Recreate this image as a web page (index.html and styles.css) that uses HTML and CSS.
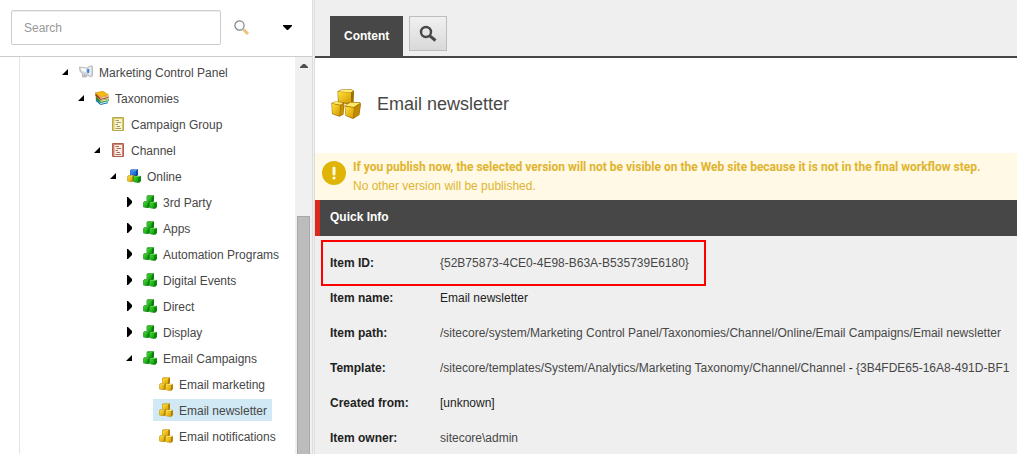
FILE: index.html
```
<!DOCTYPE html>
<html lang="en">
<head>
<meta charset="utf-8">
<title>Content Editor</title>
<link rel="stylesheet" href="styles.css">
</head>
<body>
<svg class="defs" aria-hidden="true">
  <defs>
    <linearGradient id="gold" x1="0" y1="0" x2="1" y2="1"><stop offset="0" stop-color="#ffe23a"/><stop offset="1" stop-color="#d39a00"/></linearGradient>
    <linearGradient id="green" x1="0" y1="0" x2="1" y2="1"><stop offset="0" stop-color="#3fe02e"/><stop offset="1" stop-color="#0c8d10"/></linearGradient>
    <linearGradient id="blue" x1="0" y1="0" x2="1" y2="1"><stop offset="0" stop-color="#4a9cf5"/><stop offset="1" stop-color="#0d50bd"/></linearGradient>
    <symbol id="cube-gold" viewBox="0 0 16 16" preserveAspectRatio="none">
      <path d="M0.4 3 3 0.4 15.4 0.6 15.8 11.5 12.5 15.6 0.8 14Z" fill="#a87300"/>
      <path d="M1 3.3 12 4 12 15 1.2 13.6Z" fill="url(#gold)"/>
      <path d="M1 3 3.2 0.8 15 1 12 3.6Z" fill="#ffe765"/>
      <path d="M12.6 4 15.2 1.6 15.4 11.4 12.6 14.8Z" fill="#b98100"/>
    </symbol>
    <symbol id="cube-green" viewBox="0 0 16 16" preserveAspectRatio="none">
      <path d="M0.4 3 3 0.4 15.4 0.6 15.8 11.5 12.5 15.6 0.8 14Z" fill="#087008"/>
      <path d="M1 3.3 11 4 11 15 1.2 13.6Z" fill="url(#green)"/>
      <path d="M1 3 3.2 0.8 15 1 12 3.6Z" fill="#5cd848"/>
      <path d="M12 4 15.2 1.6 15.4 11.4 12 14.8Z" fill="#078609"/>
    </symbol>
    <symbol id="cube-blue" viewBox="0 0 16 16" preserveAspectRatio="none">
      <path d="M0.4 3 3 0.4 15.4 0.6 15.8 11.5 12.5 15.6 0.8 14Z" fill="#0b3f9b"/>
      <path d="M1 3.3 12 4 12 15 1.2 13.6Z" fill="url(#blue)"/>
      <path d="M1 3 3.2 0.8 15 1 12 3.6Z" fill="#83bdfa"/>
      <path d="M12.6 4 15.2 1.6 15.4 11.4 12.6 14.8Z" fill="#0c49ac"/>
    </symbol>
    <symbol id="cubes-gold" viewBox="0 0 30 30">
      <use href="#cube-gold" x="6" y="0" width="18" height="17"/>
      <use href="#cube-gold" x="0" y="13" width="15" height="15"/>
      <use href="#cube-gold" x="13" y="14" width="17" height="16"/>
    </symbol>
    <symbol id="cubes-large" viewBox="0 0 30 30">
      <path d="M6.5 2.2 10 0.5 20 0.2 23 1.8 22.6 13.5 16.5 15 7 13.8Z" fill="#a17000"/>
      <path d="M7 3 20 3.5 20 14 7.6 13.2Z" fill="url(#gold)"/>
      <path d="M7 2.5 10 1 20 0.8 22.3 2 20 3.2Z" fill="#ffed78"/>
      <path d="M20.5 3.5 22.4 2.5 22 12.8 20.5 13.8Z" fill="#9b6d00"/>
      <path d="M0.4 14 4 12.4 12.8 13 13.4 15 12.5 25.5 8.5 27.7 1 25Z" fill="#a17000"/>
      <path d="M1 14.8 9 16.4 8.6 27 1.5 24.5Z" fill="url(#gold)"/>
      <path d="M1 14.2 4.2 12.8 12.6 13.7 9.4 15.8Z" fill="#ffe765"/>
      <path d="M9.6 16.4 12.8 14.4 12 25.1 9.2 26.9Z" fill="#c89200"/>
      <path d="M13.6 16.8 19 13 29 13.2 30 15 28.4 26 22 30 14.5 26.8Z" fill="#a17000"/>
      <path d="M14 17.4 23 18.7 22 29.2 15 26.2Z" fill="url(#gold)"/>
      <path d="M14.4 16.8 19.3 13.5 29 13.9 23 18Z" fill="#ffe765"/>
      <path d="M23.6 18.7 29.4 14.8 27.9 25.7 22.7 29Z" fill="#c18a00"/>
    </symbol>
    <symbol id="cubes-green" viewBox="0 0 30 30">
      <use href="#cube-green" x="7" y="0" width="17" height="17"/>
      <use href="#cube-green" x="0" y="13" width="15" height="15"/>
      <use href="#cube-green" x="13" y="14" width="17" height="16"/>
    </symbol>
    <symbol id="cubes-mixed" viewBox="0 0 30 30">
      <use href="#cube-blue" x="6" y="0" width="18" height="17"/>
      <use href="#cube-gold" x="0" y="13" width="15" height="15"/>
      <use href="#cube-green" x="13" y="14" width="17" height="16"/>
    </symbol>
    <symbol id="horn" viewBox="0 0 14 14">
      <path d="M0.5 2 8 3 12 0.5 13.5 1.5 13.5 11 12 12 8 9.8 7.5 12 3.5 12 3.5 8.5 1 6.5Z" fill="#d6d9dc" stroke="#a2a5a9" stroke-width=".7"/>
      <path d="M2 2.8 7 3.8 7 7 3 6Z" fill="#fff"/>
      <path d="M9 3.2 12 1.4 12 10.5 9 9Z" fill="#e9edf0"/>
      <ellipse cx="9.2" cy="6" rx="1.2" ry="2.2" fill="#2d83d8"/>
      <path d="M4.5 9 7 9.5 6.5 11.5 4.8 11.5Z" fill="#b4b7bb"/>
    </symbol>
    <symbol id="books" viewBox="0 0 14 14">
      <path d="M1 7 5.5 12.4 13 10.5 13 12.3 5.5 14 0.8 10Z" fill="#1479c4"/>
      <path d="M5.5 12 13 10.2 13 11.2 5.5 13Z" fill="#d6ecf7"/>
      <path d="M0.8 4.8 5.2 9.5 13.8 7.5 13.8 10 5.5 12 0.8 8Z" fill="#2f8c25"/>
      <path d="M5.5 9.8 13.4 8 13.4 9.2 5.5 11Z" fill="#d3edb9"/>
      <path d="M0.3 2 5 6.5 13.5 4.7 13.5 7 5.2 9 0.3 4.7Z" fill="#a73a08"/>
      <path d="M5.3 6.6 13.2 5 13.2 6.1 5.3 7.9Z" fill="#f4d5a3"/>
      <path d="M0.3 1.7 8 0.3 13.6 4 5.4 6Z" fill="#f4bd12" stroke="#be7d00" stroke-width=".5"/>
    </symbol>
    <symbol id="sheet-gold" viewBox="0 0 12 14" preserveAspectRatio="none">
      <path d="M0.5 0.5H11.5V13.5H0.5Z" fill="#fbf5d6" stroke="#b8a94c"/>
      <path d="M1 1H2.5V13H1ZM10 1H11V13H10ZM1 1H11V2H1Z" fill="#d9c763"/>
      <path d="M3.5 3.5H7M4.5 5.5H9M3.5 7.5H6M4.5 9.5H8M3.5 11.5H9" stroke="#8c8546" stroke-width=".8"/>
    </symbol>
    <symbol id="sheet-red" viewBox="0 0 12 14" preserveAspectRatio="none">
      <path d="M0.5 0.5H11.5V13.5H0.5Z" fill="#fcefe6" stroke="#ae5e50"/>
      <path d="M1 1H2.5V13H1ZM10 1H11V13H10ZM1 1H11V2H1Z" fill="#d28371"/>
      <path d="M3.5 3.5H7M4.5 5.5H9M3.5 7.5H6M4.5 9.5H8M3.5 11.5H9" stroke="#96493d" stroke-width=".8"/>
    </symbol>
    <symbol id="open" viewBox="0 0 6 6"><path d="M6 0V6H0Z"/></symbol>
    <symbol id="closed" viewBox="0 0 5 10"><path d="M0 0H1L5 4V6L1 10H0Z"/></symbol>
  </defs>
</svg>
<div class="app">
  <aside class="sidebar">
    <form class="search">
      <input class="search-box" type="text" placeholder="Search" aria-label="Search">
      <button class="plain search-go" type="button" aria-label="Run search">
        <svg width="16" height="16" viewBox="0 0 16 16"><path d="M9.5 9.5 14 14" stroke="#edc178" stroke-width="3"/><circle cx="5.5" cy="5.5" r="4.6" fill="#fafcfd" stroke="#7d8489" stroke-width="1.2"/></svg>
      </button>
      <button class="plain search-menu" type="button" aria-label="Search options">
        <svg width="9" height="5" viewBox="0 0 9 5"><path d="M0 0H9V1L5 5H4L0 1Z"/></svg>
      </button>
    </form>
    <div class="tree-pane">
      <nav class="tree">
        <ul>
          <li><div class="row"><button class="plain toggle" aria-label="Collapse"><svg class="open"><use href="#open"/></svg></button><a class="node" href="#"><svg class="icon"><use href="#horn"/></svg>Marketing Control Panel</a></div>
            <ul>
              <li><div class="row"><button class="plain toggle" aria-label="Collapse"><svg class="open"><use href="#open"/></svg></button><a class="node" href="#"><svg class="icon"><use href="#books"/></svg>Taxonomies</a></div>
                <ul>
                  <li><div class="row leaf"><a class="node" href="#"><svg class="icon sheet"><use href="#sheet-gold"/></svg>Campaign Group</a></div></li>
                  <li><div class="row"><button class="plain toggle" aria-label="Collapse"><svg class="open"><use href="#open"/></svg></button><a class="node" href="#"><svg class="icon sheet"><use href="#sheet-red"/></svg>Channel</a></div>
                    <ul>
                      <li><div class="row"><button class="plain toggle" aria-label="Collapse"><svg class="open"><use href="#open"/></svg></button><a class="node" href="#"><svg class="icon"><use href="#cubes-mixed"/></svg>Online</a></div>
                        <ul>
                          <li><div class="row"><button class="plain toggle" aria-label="Expand"><svg class="closed"><use href="#closed"/></svg></button><a class="node" href="#"><svg class="icon"><use href="#cubes-green"/></svg>3rd Party</a></div></li>
                          <li><div class="row"><button class="plain toggle" aria-label="Expand"><svg class="closed"><use href="#closed"/></svg></button><a class="node" href="#"><svg class="icon"><use href="#cubes-green"/></svg>Apps</a></div></li>
                          <li><div class="row"><button class="plain toggle" aria-label="Expand"><svg class="closed"><use href="#closed"/></svg></button><a class="node" href="#"><svg class="icon"><use href="#cubes-green"/></svg>Automation Programs</a></div></li>
                          <li><div class="row"><button class="plain toggle" aria-label="Expand"><svg class="closed"><use href="#closed"/></svg></button><a class="node" href="#"><svg class="icon"><use href="#cubes-green"/></svg>Digital Events</a></div></li>
                          <li><div class="row"><button class="plain toggle" aria-label="Expand"><svg class="closed"><use href="#closed"/></svg></button><a class="node" href="#"><svg class="icon"><use href="#cubes-green"/></svg>Direct</a></div></li>
                          <li><div class="row"><button class="plain toggle" aria-label="Expand"><svg class="closed"><use href="#closed"/></svg></button><a class="node" href="#"><svg class="icon"><use href="#cubes-green"/></svg>Display</a></div></li>
                          <li><div class="row"><button class="plain toggle" aria-label="Collapse"><svg class="open"><use href="#open"/></svg></button><a class="node" href="#"><svg class="icon"><use href="#cubes-green"/></svg>Email Campaigns</a></div>
                            <ul>
                              <li><div class="row leaf"><a class="node" href="#"><svg class="icon"><use href="#cubes-gold"/></svg>Email marketing</a></div></li>
                              <li><div class="row leaf"><a class="node selected" href="#"><svg class="icon"><use href="#cubes-gold"/></svg>Email newsletter</a></div></li>
                              <li><div class="row leaf"><a class="node" href="#"><svg class="icon"><use href="#cubes-gold"/></svg>Email notifications</a></div></li>
                            </ul>
                          </li>
                        </ul>
                      </li>
                    </ul>
                  </li>
                </ul>
              </li>
            </ul>
          </li>
        </ul>
      </nav>
      <div class="scrollbar">
        <svg width="8" height="4" viewBox="0 0 8 4"><path d="M3 0H5L8 3V4H0V3Z" fill="#505050"/></svg>
        <div class="thumb"></div>
      </div>
    </div>
  </aside>
  <div class="splitter"></div>
  <main class="editor">
    <div class="tabs">
      <button class="tab" type="button">Content</button>
      <button class="tab-search" type="button" aria-label="Search tab">
        <svg width="18" height="18" viewBox="0 0 18 18" fill="none" stroke="#474747"><circle cx="7" cy="7" r="5" stroke-width="2.4"/><path d="M10.8 10.8 16.5 15.5" stroke-width="3"/></svg>
      </button>
    </div>
    <header class="title">
      <svg class="title-icon"><use href="#cubes-large"/></svg>
      <h1>Email newsletter</h1>
    </header>
    <div class="warning">
      <svg class="warning-icon" viewBox="0 0 24 24"><circle cx="12" cy="12" r="12" fill="#e0b406"/><path d="M12 7V13" stroke="#fff9e5" stroke-width="3" stroke-linecap="round"/><circle cx="12" cy="17" r="1.6" fill="#fff9e5"/></svg>
      <div class="warning-text">
        <strong>If you publish now, the selected version will not be visible on the Web site because it is not in the final workflow step.</strong>
        <p>No other version will be published.</p>
      </div>
    </div>
    <h2 class="section">Quick Info</h2>
    <div class="info">
      <table>
        <tr><th scope="row">Item ID:</th><td class="field">{52B75873-4CE0-4E98-B63A-B535739E6180}</td></tr>
        <tr><th scope="row">Item name:</th><td>Email newsletter</td></tr>
        <tr><th scope="row">Item path:</th><td class="field">/sitecore/system/Marketing Control Panel/Taxonomies/Channel/Online/Email Campaigns/Email newsletter</td></tr>
        <tr><th scope="row">Template:</th><td><a href="#">/sitecore/templates/System/Analytics/Marketing Taxonomy/Channel/Channel</a> - <span class="guid">{3B4FDE65-16A8-491D-BF1</span></td></tr>
        <tr><th scope="row">Created from:</th><td>[unknown]</td></tr>
        <tr><th scope="row">Item owner:</th><td class="field">sitecore\admin</td></tr>
      </table>
      <div class="marker"></div>
    </div>
  </main>
</div>
</body>
</html>
```
FILE: styles.css
```
* { box-sizing: border-box; }
body {
  margin: 0;
  font: 12px/18px "Liberation Sans", Arial, sans-serif;
  color: #474747;
  background: #fff;
  overflow: hidden;
}
a { color: inherit; text-decoration: none; }
ul { list-style: none; margin: 0; padding: 0; }
.defs { position: absolute; width: 0; height: 0; }
.plain { border: 0; padding: 0; background: none; display: flex; align-items: center; justify-content: center; }
.app { display: flex; height: 100vh; }

.sidebar { flex: 0 0 312px; display: flex; flex-direction: column; min-height: 0; }
.search { display: flex; align-items: flex-start; padding: 10px 20px 11px 11px; border-bottom: 1px solid #ccc; }
.search-box {
  flex: 1;
  min-width: 0;
  height: 35px;
  padding: 0 12px;
  border: 1px solid #ccc;
  border-radius: 2px;
  box-shadow: inset 0 1px 1px #eee;
  font: inherit;
  color: #474747;
}
.search-box::placeholder { color: #999; opacity: 1; }
.search-go { height: 35px; margin-left: 12px; width: 18px; }
.search-menu { height: 35px; margin-left: 31px; width: 10px; }
.tree-pane { flex: 1; display: flex; min-height: 0; }
.tree { flex: 1; margin-left: 19px; padding-top: 2px; border-left: 1px solid #e3e3e3; overflow: hidden; }
.tree > ul { padding-left: 37px; }
.tree ul ul { padding-left: 16px; }
.row { display: flex; height: 26px; padding: 2px 0; }
.leaf { padding-left: 16px; }
.toggle { width: 16px; height: 22px; }
.open { width: 6px; height: 6px; }
.closed { width: 5px; height: 10px; }
.node { display: flex; align-items: flex-start; gap: 6px; padding: 0 5px 0 6px; line-height: 24px; white-space: nowrap; }
.icon { width: 14px; height: 14px; margin-top: 4px; }
.sheet { width: 12px; margin-left: 1px; margin-right: 1px; }
.selected { background: #d0e9f5; }
.scrollbar { width: 17px; padding-top: 7px; background: #f0f0f0; display: flex; flex-direction: column; align-items: center; }
.thumb { flex: 1; width: 13px; margin-top: 148px; background: #bcbcbc; border: 1px solid #a8a8a8; border-bottom: 0; }

.splitter { flex: 0 0 3px; background: #f0f0f0; border-left: 1px solid #ddd; border-right: 1px solid #ddd; }

.editor { flex: 1; min-width: 0; background: #efefef; overflow: hidden; }
.tabs { display: flex; gap: 6px; padding: 16px 15px 0; border-bottom: 2px solid #474747; }
.tab { height: 40px; padding: 0 14px; border: 0; background: #474747; color: #fff; font: bold 12px/18px "Liberation Sans", Arial, sans-serif; }
.tab-search { width: 38px; height: 35px; padding: 0; border: 1px solid #bdbdbd; background: linear-gradient(#f0f0f0, #d9d9d9); display: flex; align-items: center; justify-content: center; }
.title { display: flex; align-items: center; gap: 16px; height: 95px; padding: 0 16px 4px; background: #fff; }
.title-icon { width: 30px; height: 30px; }
h1 { margin: 0; font-size: 18px; line-height: 24px; font-weight: normal; }
.warning { display: flex; gap: 7px; padding: 5px 7px; background: #fff9e5; color: #e0b42e; white-space: nowrap; }
.warning-icon { flex: none; width: 24px; height: 24px; margin-top: 3px; }
.warning-text strong { display: block; font-family: Roboto, "Liberation Sans", sans-serif; }
.warning-text p { margin: 1px 0 0; }
.section { margin: 0; padding: 8px 10px 10px; border-left: 5px solid #dc291e; background: #474747; color: #fff; font-size: 12px; line-height: 18px; }
.info { position: relative; padding: 10px 15px 0; }
table { border-collapse: collapse; }
tr { height: 35px; }
th { min-width: 110px; padding: 0; text-align: left; vertical-align: top; line-height: 35px; color: #222; }
td { padding: 0; white-space: nowrap; vertical-align: top; line-height: 35px; color: #222; }
td a, .guid, .field { color: #474747; }
.marker { position: absolute; left: 6px; top: 4px; width: 385px; height: 46px; border: 2px solid #f00; }
```
